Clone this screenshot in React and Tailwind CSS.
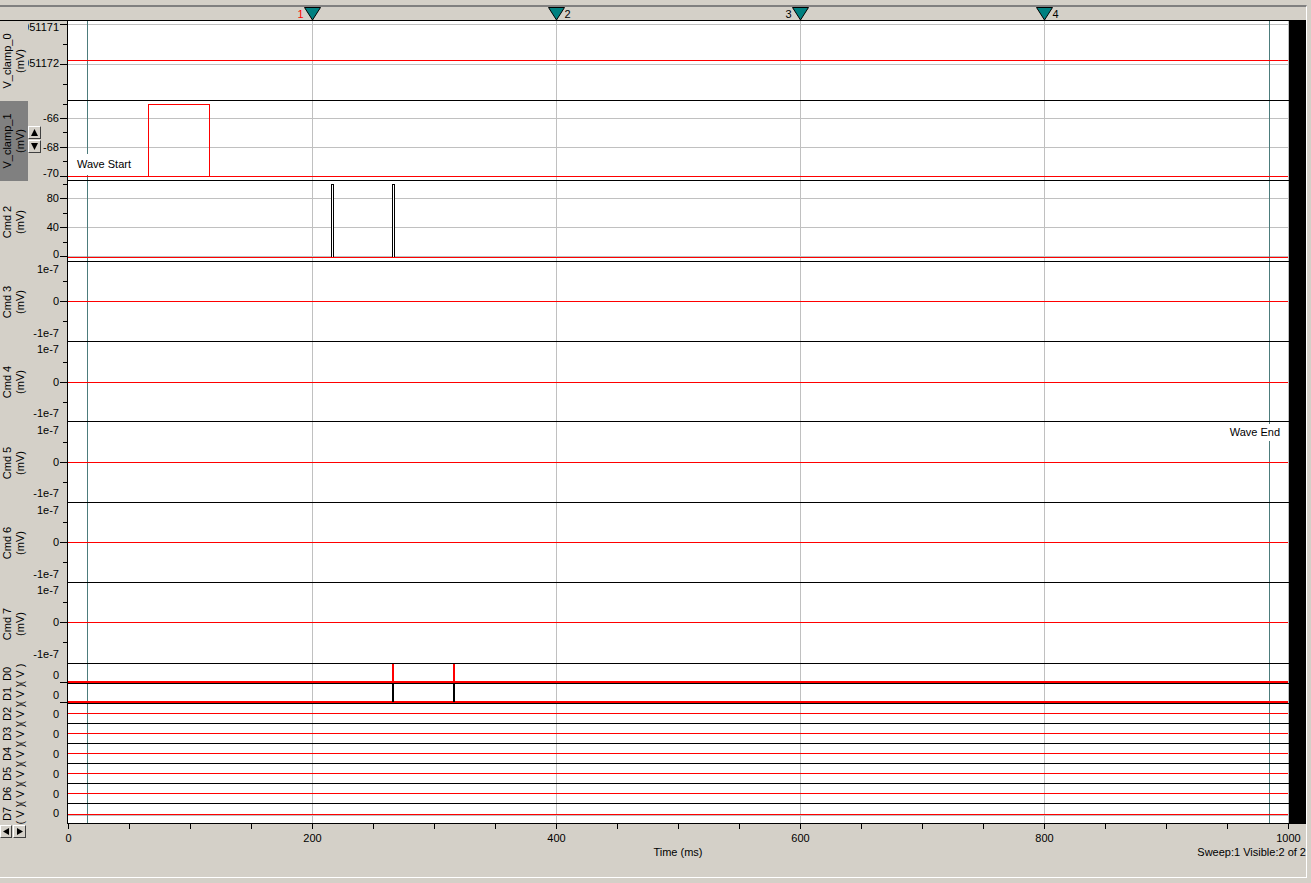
import React from 'react'

const X = (t) => Math.round(68.4 + 1.2198 * t)
const GRID = [200, 400, 600, 800, 1000].map(X)
const WAVE_START = 87
const WAVE_END = 1269
const FONT = 'Liberation Sans, Arial, sans-serif'

const analogRows = [
  {
    name: 'V_clamp_0', unit: '(mV)', h: 80, hc: 'h-[80px]',
    labels: [[5.7, '-70.0051171'], [42.3, '-70.0051172']],
    major: [3, 43], minor: [23, 63], grid: [3, 43],
    red: 'M68 39.5 H1288',
  },
  {
    name: 'V_clamp_1', unit: '(mV)', h: 80, hc: 'h-[80px]', dark: true, spin: true,
    labels: [[17, '-66'], [46, '-68'], [71.7, '-70']],
    major: [17, 46, 75], minor: [3, 31, 60], grid: [17, 46],
    red: 'M68 75.5 H1288 M148.5 75.5 V3.5 H209.5 V75.5',
    note: { text: 'Wave Start', x: 77, y: 63, anchor: 'start', box: [75, 53, 60, 21] },
  },
  {
    name: 'Cmd 2', unit: '(mV)', h: 81, hc: 'h-[81px]',
    labels: [[17, '80'], [45.5, '40'], [73, '0']],
    major: [17, 46, 75], minor: [3, 32, 61], grid: [17, 46, 75],
    red: 'M68 76.5 H1288',
    pulses: [331, 392],
  },
  {
    name: 'Cmd 3', unit: '(mV)', h: 80, hc: 'h-[80px]',
    labels: [[7.3, '1e-7'], [39, '0'], [71, '-1e-7']],
    major: [39], minor: [19, 59], grid: [],
    red: 'M68 39.5 H1288',
  },
  {
    name: 'Cmd 4', unit: '(mV)', h: 80, hc: 'h-[80px]',
    labels: [[6.5, '1e-7'], [39.5, '0'], [70.5, '-1e-7']],
    major: [40], minor: [20, 60], grid: [],
    red: 'M68 40.5 H1288',
  },
  {
    name: 'Cmd 5', unit: '(mV)', h: 81, hc: 'h-[81px]',
    labels: [[8, '1e-7'], [40, '0'], [71, '-1e-7']],
    major: [40], minor: [20, 60], grid: [],
    red: 'M68 40.5 H1288',
    note: { text: 'Wave End', x: 1280, y: 10, anchor: 'end', box: [1227, 2, 55, 17] },
  },
  {
    name: 'Cmd 6', unit: '(mV)', h: 80, hc: 'h-[80px]',
    labels: [[7, '1e-7'], [39, '0'], [71, '-1e-7']],
    major: [39], minor: [19, 59], grid: [],
    red: 'M68 39.5 H1288',
  },
  {
    name: 'Cmd 7', unit: '(mV)', h: 81, hc: 'h-[81px]',
    labels: [[7, '1e-7'], [39, '0'], [71, '-1e-7']],
    major: [39], minor: [19, 59], grid: [],
    red: 'M68 39.5 H1288',
  },
]

const digitalRows = [0, 1, 2, 3, 4, 5, 6, 7].map((i) => ({
  name: 'D' + i,
  unit: '( V )',
  h: 20,
  hc: 'h-[20px]',
  labels: [[i < 2 ? 11 : i === 7 ? 9 : 9.5, '0']],
  major: i < 2 ? [18] : [],
  minor: [],
  grid: i === 7 ? [11] : [],
  red: i < 2 ? 'M68 17.5 H1288 M68 18.5 H1288' : i === 7 ? 'M68 10.5 H1288' : 'M68 9.5 H1288',
  digital: i,
}))

function UpTri() {
  return (
    <svg width="7" height="7" className="block">
      <polygon points="3.5,0 7,7 0,7" fill="black" />
    </svg>
  )
}

function DownTri() {
  return (
    <svg width="7" height="7" className="block">
      <polygon points="0,0 7,0 3.5,7" fill="black" />
    </svg>
  )
}

function LeftTri() {
  return (
    <svg width="6" height="7" className="block">
      <polygon points="0,3.5 6,0 6,7" fill="black" />
    </svg>
  )
}

function RightTri() {
  return (
    <svg width="6" height="7" className="block">
      <polygon points="0,0 6,3.5 0,7" fill="black" />
    </svg>
  )
}

function Btn({ children, w }) {
  return (
    <div className={`${w} h-[13px] bg-[#d4d0c8] border border-t-white border-l-white border-r-[#404040] border-b-[#404040] flex items-center justify-center`}>
      {children}
    </div>
  )
}

function Row({ r }) {
  const h = r.h
  return (
    <div className={`relative flex shrink-0 ${r.hc}`}>
      <div className={`w-[28px] shrink-0 flex items-center justify-center overflow-hidden ${r.dark ? 'bg-[#808080]' : ''}`}>
        <div className="-rotate-90 shrink-0 whitespace-nowrap text-center text-[11px] leading-[13px]">
          <div>{r.name}</div>
          <div>{r.unit}</div>
        </div>
      </div>
      <svg width="1261" height={h} className="block shrink-0" shapeRendering="crispEdges">
        <g transform="translate(-28 0)">
          <rect x="68" y="0" width="1221" height={h} fill="white" />
          {r.grid.map((y) => (
            <line key={'g' + y} x1="68" x2="1288" y1={y + 0.5} y2={y + 0.5} stroke="#c0c0c0" />
          ))}
          {GRID.map((x) => (
            <line key={'v' + x} x1={x + 0.5} x2={x + 0.5} y1="0" y2={h} stroke="#c0c0c0" />
          ))}
          {[WAVE_START, WAVE_END].map((x) => (
            <line key={'w' + x} x1={x + 0.5} x2={x + 0.5} y1="0" y2={h} stroke="#4d7c7c" />
          ))}
          <path d={r.red} stroke="#ff0000" fill="none" />
          {r.pulses && r.pulses.map((x) => (
            <path key={'p' + x} d={`M${x + 0.5} 76 V3.5 H${x + 2.5} V76`} stroke="black" fill="white" />
          ))}
          {r.digital === 0 && (
            <>
              <rect x="392" y="0" width="2" height="18" fill="#ff0000" />
              <rect x="453" y="0" width="2" height="18" fill="#ff0000" />
            </>
          )}
          {r.digital === 1 && (
            <>
              <rect x="392" y="0" width="2" height="18" fill="black" />
              <rect x="453" y="0" width="2" height="18" fill="black" />
            </>
          )}
          {r.note && (
            <>
              <rect x={r.note.box[0]} y={r.note.box[1]} width={r.note.box[2]} height={r.note.box[3]} fill="white" />
              <text x={r.note.x} y={r.note.y + 4} textAnchor={r.note.anchor} fontSize="11" fontFamily={FONT} fill="black">
                {r.note.text}
              </text>
            </>
          )}
          <line x1="67.5" x2="67.5" y1="0" y2={h} stroke="black" />
          <line x1="67" x2="1289" y1={h - 0.5} y2={h - 0.5} stroke="black" />
          {r.major.map((y) => (
            <line key={'M' + y} x1="60" x2="67" y1={y + 0.5} y2={y + 0.5} stroke="black" />
          ))}
          {r.minor.map((y) => (
            <line key={'m' + y} x1="63" x2="67" y1={y + 0.5} y2={y + 0.5} stroke="black" />
          ))}
          {r.labels.map(([y, t]) => (
            <text key={t + y} x="59" y={y + 4} textAnchor="end" fontSize="11" fontFamily={FONT} fill="black">
              {t}
            </text>
          ))}
        </g>
      </svg>
      {r.spin && (
        <div className="absolute left-[28px] top-[25px] flex flex-col gap-px">
          <Btn w="w-[13px]"><UpTri /></Btn>
          <Btn w="w-[13px]"><DownTri /></Btn>
        </div>
      )}
    </div>
  )
}

function MarkerBar() {
  const marks = [
    { t: 200, n: '1', side: 'left', color: '#ff0000' },
    { t: 400, n: '2', side: 'right', color: '#000' },
    { t: 600, n: '3', side: 'left', color: '#000' },
    { t: 800, n: '4', side: 'right', color: '#000' },
  ]
  return (
    <svg width="1306" height="13" className="block">
      {marks.map((m) => {
        const x = X(m.t) + 0.5
        return (
          <g key={m.n}>
            <polygon points={`${x - 8},0.5 ${x + 8},0.5 ${x},13`} fill="#008080" stroke="black" strokeWidth="1" />
            <text
              x={m.side === 'left' ? x - 9 : x + 8}
              y="11"
              textAnchor={m.side === 'left' ? 'end' : 'start'}
              fontSize="11"
              fontFamily={FONT}
              fill={m.color}
            >
              {m.n}
            </text>
          </g>
        )
      })}
    </svg>
  )
}

function TimeAxis() {
  const ticks = []
  for (let t = 0; t <= 1000; t += 50) ticks.push(t)
  return (
    <svg width="1306" height="21" className="block" shapeRendering="crispEdges">
      {ticks.map((t) => (
        <line key={t} x1={X(t) + 0.5} x2={X(t) + 0.5} y1="0" y2="5" stroke="black" />
      ))}
      {[0, 200, 400, 600, 800, 1000].map((t) => (
        <text key={'l' + t} x={X(t) + 0.5} y="18" textAnchor="middle" fontSize="11" fontFamily={FONT} fill="black">
          {t}
        </text>
      ))}
    </svg>
  )
}

export default function App() {
  return (
    <div className="w-[1311px] h-[883px] bg-[#d4d0c8] pt-[5px] pb-[5px] pr-[4px] font-['Liberation_Sans',Arial,sans-serif] text-[11px] text-black overflow-hidden">
      <div className="h-[873px] border-t-2 border-t-[#808080] border-r border-r-white border-b border-b-white flex flex-col">
        <div className="h-[14px] shrink-0 border-b border-black">
          <MarkerBar />
        </div>

        <div className="flex shrink-0">
          <div className="flex flex-col w-[1289px]">
            {analogRows.map((r) => (
              <Row key={r.name} r={r} />
            ))}
            {digitalRows.map((r) => (
              <Row key={r.name} r={r} />
            ))}
          </div>
          <div className="w-[17px] bg-black" />
        </div>

        <div className="relative flex-1">
          <TimeAxis />
          <div className="grid grid-cols-[68px_1220px_18px] h-[14px] leading-[14px]">
            <div className="col-start-2 row-start-1 text-center">Time (ms)</div>
            <div className="col-start-2 col-span-2 row-start-1 justify-self-end">Sweep:1 Visible:2 of 2</div>
          </div>
          <div className="absolute left-0 top-[1px] flex gap-px">
            <Btn w="w-[12px]"><LeftTri /></Btn>
            <Btn w="w-[13px]"><RightTri /></Btn>
          </div>
        </div>
      </div>
    </div>
  )
}
